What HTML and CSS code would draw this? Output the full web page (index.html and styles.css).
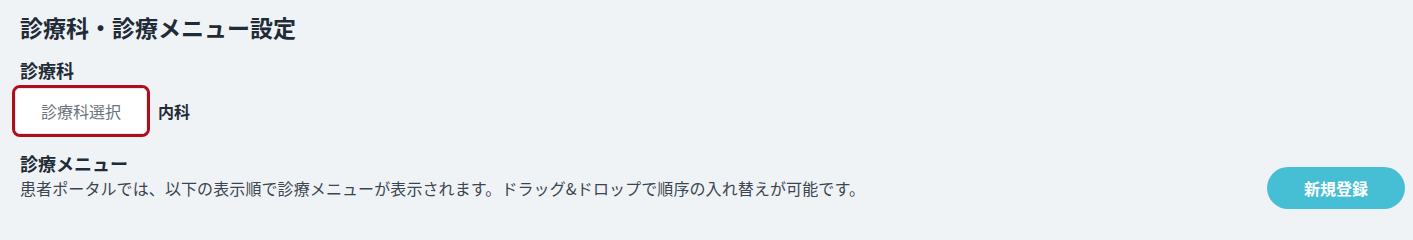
FILE: index.html
```html
<!DOCTYPE html>
<html lang="ja">
<head>
<meta charset="utf-8">
<title>診療科・診療メニュー設定</title>
<link rel="stylesheet" href="styles.css">
</head>
<body>
<main class="page">
  <h1 class="title">診療科・診療メニュー設定</h1>
  <section class="section">
    <h2 class="section-title">診療科</h2>
    <div class="dept-row">
      <div class="highlight">
        <button class="select-btn" type="button">診療科選択</button>
      </div>
      <span class="dept-name">内科</span>
    </div>
  </section>
  <section class="menu-section">
    <div class="menu-text">
      <h2 class="section-title">診療メニュー</h2>
      <p class="desc">患者ポータルでは、以下の表示順で診療メニューが表示されます。ドラッグ&amp;ドロップで順序の入れ替えが可能です。</p>
    </div>
    <button class="new-btn" type="button">新規登録</button>
  </section>
</main>
</body>
</html>
```
FILE: styles.css
```css
html, body {
  margin: 0;
  padding: 0;
  background: #f0f3f6;
}
body {
  font-family: "Noto Sans CJK JP", "Noto Sans", sans-serif;
  color: #26313b;
}
.page {
  padding: 10px 8px 0 20px;
}
.title {
  margin: 0;
  font-size: 23px;
  line-height: 34px;
  font-weight: 700;
  color: #1f2c37;
}
.section {
  margin-top: 13px;
}
.section-title {
  margin: 0;
  font-size: 18px;
  line-height: 26px;
  font-weight: 700;
  color: #1f2c37;
}
.dept-row {
  display: flex;
  align-items: center;
  margin-top: 2px;
  margin-left: -8px;
}
.highlight {
  border: 3px solid #b10c18;
  border-radius: 8px;
  display: flex;
}
.select-btn {
  width: 132px;
  height: 46px;
  background: #ffffff;
  border: 1px solid #e2e7eb;
  border-radius: 5px;
  font-family: inherit;
  font-size: 16px;
  color: #6b737c;
  padding: 0;
}
.dept-name {
  margin-left: 8px;
  font-size: 16px;
  font-weight: 700;
  color: #1f2c37;
}
.menu-section {
  margin-top: 13px;
  display: flex;
  align-items: flex-end;
  justify-content: space-between;
}
.desc {
  margin: 1px 0 10px;
  font-size: 16px;
  line-height: 22px;
  letter-spacing: 0.1px;
  color: #3b4550;
}
.new-btn {
  width: 138px;
  height: 42px;
  border: none;
  border-radius: 21px;
  background: #46bed3;
  color: #ffffff;
  font-family: inherit;
  font-size: 16px;
  font-weight: 700;
  padding: 0;
}
```
